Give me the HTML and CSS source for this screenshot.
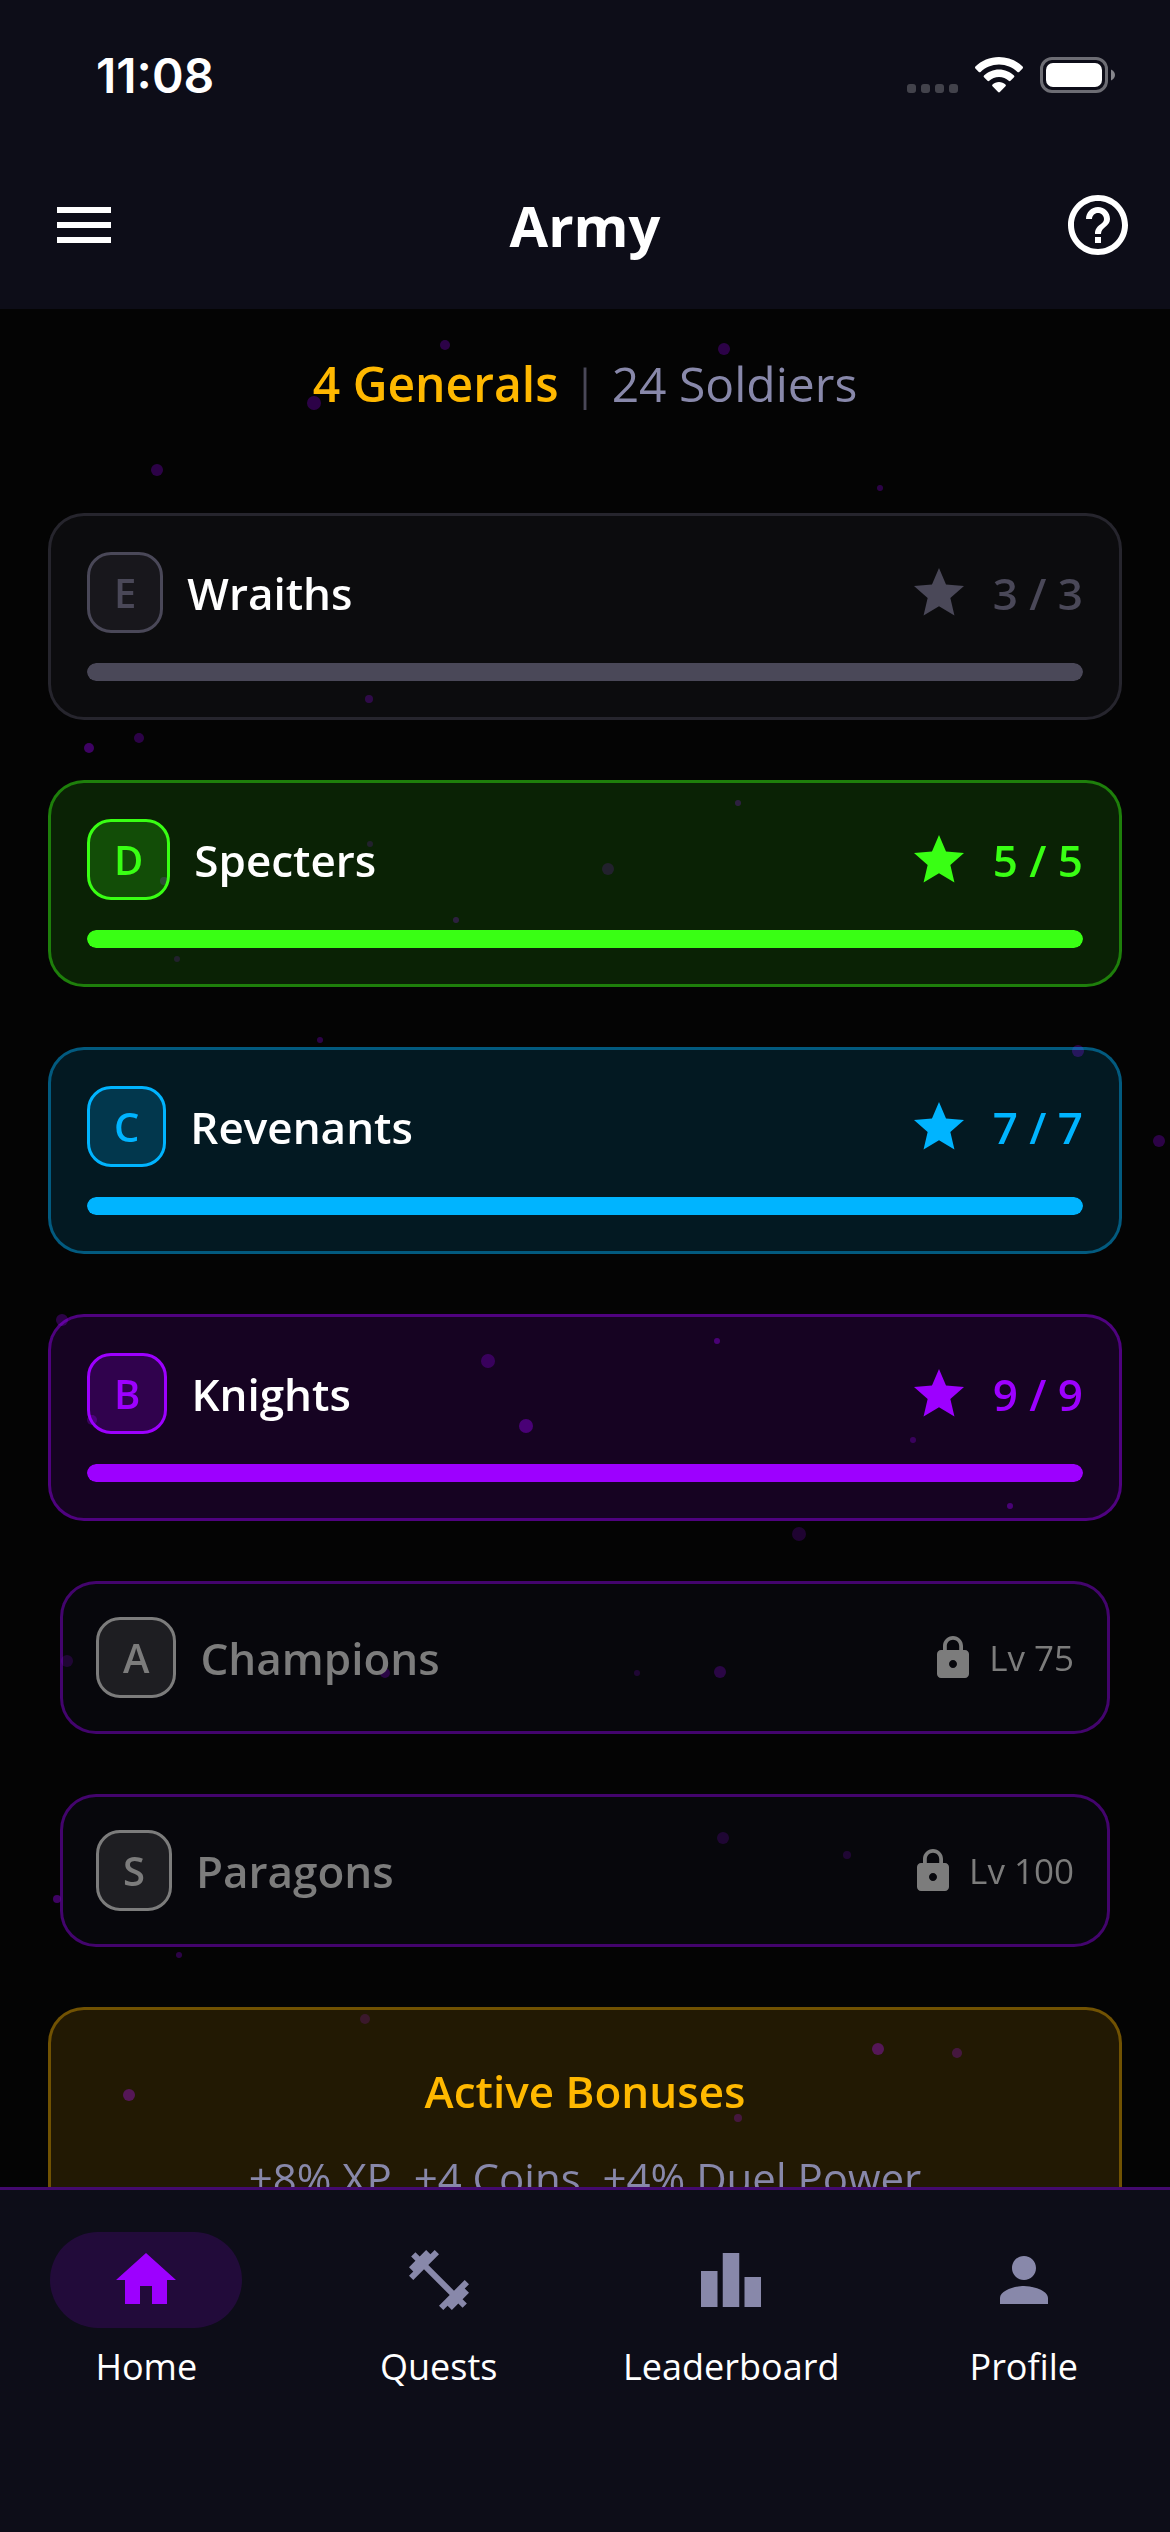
FILE: index.html
```html
<!DOCTYPE html>
<html lang="en">
<head>
    <meta charset="UTF-8">
    <meta name="viewport" content="width=device-width, initial-scale=1.0">
    <title>Army</title>
    <link rel="stylesheet" href="styles.css">
</head>
<body>
    <!-- floating particles behind the list -->
    <svg class="particles" viewBox="0 0 1170 2532" preserveAspectRatio="xMidYMin slice" aria-hidden="true">
        <circle cx="445" cy="345" r="5"/>
        <circle cx="724" cy="349" r="6"/>
        <circle cx="314" cy="403" r="7"/>
        <circle cx="157" cy="470" r="6"/>
        <circle cx="880" cy="488" r="3"/>
        <circle cx="369" cy="699" r="4"/>
        <circle cx="139" cy="738" r="5"/>
        <circle class="bright" cx="89" cy="748" r="5"/>
        <circle cx="738" cy="803" r="3"/>
        <circle class="dim" cx="370" cy="844" r="3"/>
        <circle class="dim" cx="304" cy="856" r="3"/>
        <circle class="dim" cx="608" cy="869" r="6"/>
        <circle cx="164" cy="881" r="4"/>
        <circle cx="456" cy="920" r="3"/>
        <circle class="dim" cx="177" cy="959" r="3"/>
        <circle cx="320" cy="1040" r="3"/>
        <circle cx="1078" cy="1051" r="6"/>
        <circle cx="1159" cy="1141" r="6"/>
        <circle cx="62" cy="1320" r="6"/>
        <circle class="bright" cx="717" cy="1341" r="3"/>
        <circle cx="488" cy="1361" r="7"/>
        <circle cx="92" cy="1420" r="5"/>
        <circle class="bright" cx="526" cy="1426" r="7"/>
        <circle cx="913" cy="1440" r="3"/>
        <circle class="bright" cx="1010" cy="1506" r="3"/>
        <circle class="dim" cx="799" cy="1534" r="7"/>
        <circle cx="67" cy="1661" r="6"/>
        <circle class="bright" cx="385" cy="1673" r="5"/>
        <circle cx="637" cy="1673" r="3"/>
        <circle class="bright" cx="720" cy="1672" r="6"/>
        <circle cx="723" cy="1838" r="6"/>
        <circle cx="847" cy="1855" r="4"/>
        <circle class="bright" cx="57" cy="1899" r="4"/>
        <circle cx="179" cy="1955" r="3"/>
        <circle class="dim" cx="365" cy="2019" r="5"/>
        <circle class="bright" cx="878" cy="2049" r="6"/>
        <circle cx="957" cy="2053" r="5"/>
        <circle class="bright" cx="129" cy="2095" r="6"/>
        <circle cx="738" cy="2118" r="4"/>
    </svg>

    <!-- reusable icons -->
    <svg class="sprite" aria-hidden="true">
        <symbol id="star" viewBox="0 0 24 24"><path d="M12 17.27L18.18 21l-1.64-7.03L22 9.24l-7.19-.61L12 2 9.19 8.63 2 9.24l5.46 4.73L5.82 21z"/></symbol>
        <symbol id="lock" viewBox="0 0 24 24"><path d="M18 8h-1V6c0-2.76-2.24-5-5-5S7 3.24 7 6v2H6c-1.1 0-2 .9-2 2v10c0 1.1.9 2 2 2h12c1.1 0 2-.9 2-2V10c0-1.1-.9-2-2-2zm-6 9c-1.1 0-2-.9-2-2s.9-2 2-2 2 .9 2 2-.9 2-2 2zm3.1-9H8.9V6c0-1.71 1.39-3.1 3.1-3.1s3.1 1.39 3.1 3.1v2z"/></symbol>
    </svg>

    <header class="header">
        <div class="status-bar">
            <span class="time">11:08</span>
            <div class="status-icons">
                <svg class="signal" viewBox="0 0 51 36">
                    <rect x="0" y="27" width="9" height="9" rx="3"/>
                    <rect x="14" y="27" width="9" height="9" rx="3"/>
                    <rect x="28" y="27" width="9" height="9" rx="3"/>
                    <rect x="42" y="27" width="9" height="9" rx="3"/>
                </svg>
                <svg class="wifi" viewBox="0 0 48 36">
                    <path d="M24 0C14.8 0 6.4 3.6.4 9.6q-.8.9 0 1.8l3.4 3.5q.9.8 1.8 0C10.4 10.2 16.9 7.4 24 7.4s13.6 2.800 18.4 7.5q.9.8 1.8 0l3.4-3.5q.8-.9 0-1.8C41.6 3.6 33.2 0 24 0z"/>
                    <path d="M24 12.4c-5.8 0-11.1 2.3-15 6.1q-.9.9 0 1.8l3.5 3.5q.9.9 1.8 0c2.5-2.4 5.9-3.9 9.7-3.9s7.2 1.5 9.7 3.9q.9.9 1.8 0l3.5-3.5q.9-.9 0-1.8c-3.9-3.8-9.2-6.1-15-6.1z"/>
                    <path d="M24 25c-2.5 0-4.8.9-6.5 2.4q-.9.9 0 1.8l5.6 5.9q.9.9 1.8 0l5.6-5.9q.9-.9 0-1.8C28.8 25.9 26.5 25 24 25z"/>
                </svg>
                <svg class="battery" viewBox="0 0 75 36">
                    <rect class="shell" x="1.5" y="1.5" width="65" height="33" rx="10.5"/>
                    <rect x="6" y="6" width="56" height="24" rx="7"/>
                    <path class="nub" d="M71 12.5c2.4 1 4 3.1 4 5.5s-1.6 4.5-4 5.5z"/>
                </svg>
            </div>
        </div>
        <div class="toolbar">
            <button class="icon-btn menu-btn" aria-label="Menu">
                <svg viewBox="0 0 24 24"><path d="M3 18h18v-2H3v2zm0-5h18v-2H3v2zm0-7v2h18V6H3z"/></svg>
            </button>
            <h1>Army</h1>
            <button class="icon-btn help-btn" aria-label="Help">
                <svg viewBox="0 0 24 24"><path d="M11 18h2v-2h-2v2zm1-16C6.48 2 2 6.48 2 12s4.48 10 10 10 10-4.48 10-10S17.52 2 12 2zm0 18c-4.41 0-8-3.59-8-8s3.59-8 8-8 8 3.59 8 8-3.59 8-8 8zm0-14c-2.21 0-4 1.79-4 4h2c0-1.1.9-2 2-2s2 .9 2 2c0 2-3 1.75-3 5h2c0-2.25 3-2.5 3-5 0-2.21-1.79-4-4-4z"/></svg>
            </button>
        </div>
    </header>

    <main class="content">
        <p class="summary">
            <span class="generals">4 Generals</span>
            <span class="divider">|</span>
            <span class="soldiers">24 Soldiers</span>
        </p>

        <section class="rank-card rank-e">
            <div class="rank-row">
                <span class="badge">E</span>
                <h2>Wraiths</h2>
                <svg class="star"><use href="#star"/></svg>
                <span class="count">3 / 3</span>
            </div>
            <div class="bar"><div class="fill" style="width: 100%"></div></div>
        </section>

        <section class="rank-card rank-d">
            <div class="rank-row">
                <span class="badge">D</span>
                <h2>Specters</h2>
                <svg class="star"><use href="#star"/></svg>
                <span class="count">5 / 5</span>
            </div>
            <div class="bar"><div class="fill" style="width: 100%"></div></div>
        </section>

        <section class="rank-card rank-c">
            <div class="rank-row">
                <span class="badge">C</span>
                <h2>Revenants</h2>
                <svg class="star"><use href="#star"/></svg>
                <span class="count">7 / 7</span>
            </div>
            <div class="bar"><div class="fill" style="width: 100%"></div></div>
        </section>

        <section class="rank-card rank-b">
            <div class="rank-row">
                <span class="badge">B</span>
                <h2>Knights</h2>
                <svg class="star"><use href="#star"/></svg>
                <span class="count">9 / 9</span>
            </div>
            <div class="bar"><div class="fill" style="width: 100%"></div></div>
        </section>

        <section class="rank-card locked">
            <div class="rank-row">
                <span class="badge">A</span>
                <h2>Champions</h2>
                <svg class="lock"><use href="#lock"/></svg>
                <span class="level">Lv 75</span>
            </div>
        </section>

        <section class="rank-card locked">
            <div class="rank-row">
                <span class="badge">S</span>
                <h2>Paragons</h2>
                <svg class="lock"><use href="#lock"/></svg>
                <span class="level">Lv 100</span>
            </div>
        </section>

        <section class="bonus-card">
            <h2>Active Bonuses</h2>
            <p>+8% XP, +4 Coins, +4% Duel Power</p>
        </section>
    </main>

    <nav class="tab-bar">
        <a href="#home" class="tab active">
            <span class="tab-icon"><svg viewBox="0 0 24 24"><path d="M10 20v-6h4v6h5v-8h3L12 3 2 12h3v8z"/></svg></span>
            Home
        </a>
        <a href="#quests" class="tab">
            <span class="tab-icon"><svg viewBox="0 0 24 24"><path d="M20.57 14.86L22 13.43 20.57 12 17 15.57 8.43 7 12 3.43 10.57 2 9.14 3.43 7.71 2 5.57 4.14 4.14 2.71 2.71 4.14l1.43 1.43L2 7.71l1.43 1.43L2 10.57 3.43 12 7 8.43 15.57 17 12 20.57 13.43 22l1.43-1.43L16.29 22l2.14-2.14 1.43 1.43 1.43-1.43-1.43-1.43L22 16.29z"/></svg></span>
            Quests
        </a>
        <a href="#leaderboard" class="tab">
            <span class="tab-icon"><svg viewBox="0 0 24 24"><path d="M7.5 21H2V9h5.5v12zm7.25-18h-5.5v18h5.5V3zM22 11h-5.5v10H22V11z"/></svg></span>
            Leaderboard
        </a>
        <a href="#profile" class="tab">
            <span class="tab-icon"><svg viewBox="0 0 24 24"><path d="M12 12c2.21 0 4-1.79 4-4s-1.79-4-4-4-4 1.79-4 4 1.79 4 4 4zm0 2c-2.67 0-8 1.34-8 4v2h16v-2c0-2.66-5.33-4-8-4z"/></svg></span>
            Profile
        </a>
    </nav>
</body>
</html>
```
FILE: styles.css
```css
:root {
    --bg: #040404;
    --surface: #0d0d18;
    --muted: #8888aa;
    --gold: 255, 184, 0;
    --purple: 157, 0, 255;
}

* {
    box-sizing: border-box;
}

body {
    margin: 0;
    height: 100vh;
    display: flex;
    flex-direction: column;
    background: var(--bg);
    color: white;
    font-family: 'Open Sans', 'Noto Sans', sans-serif;
}

h1, h2, p {
    margin: 0;
}

svg {
    display: block;
    fill: currentColor;
    flex-shrink: 0;
}

.sprite {
    position: absolute;
    width: 0;
    height: 0;
}

.particles {
    position: fixed;
    inset: 0;
    width: 100%;
    height: 100%;
    z-index: -1;
    fill: rgba(var(--purple), 0.27);
}

.particles .dim {
    fill: rgba(var(--purple), 0.18);
}

.particles .bright {
    fill: rgba(var(--purple), 0.38);
}

/* header */
.header {
    background: var(--surface);
    padding-bottom: 48px;
}

.status-bar {
    display: flex;
    justify-content: space-between;
    align-items: center;
    height: 150px;
    padding: 0 55px 0 96px;
}

.time {
    font-family: Inter, sans-serif;
    font-size: 48px;
    font-weight: 600;
}

.status-icons {
    display: flex;
    gap: 17px;
}

.signal {
    width: 51px;
    height: 36px;
    opacity: 0.22;
}

.wifi {
    width: 48px;
    height: 36px;
}

.battery {
    width: 75px;
    height: 36px;
}

.battery .shell {
    fill: none;
    stroke: currentColor;
    stroke-width: 3;
    opacity: 0.4;
}

.battery .nub {
    opacity: 0.5;
}

.toolbar {
    display: grid;
    grid-template-columns: 1fr auto 1fr;
    align-items: center;
    height: 111px;
    padding: 39px 36px 0;
}

.icon-btn {
    padding: 0;
    border: none;
    background: none;
    color: white;
    cursor: pointer;
}

.icon-btn svg {
    width: 72px;
    height: 72px;
}

.menu-btn {
    justify-self: start;
    margin-left: 12px;
}

.help-btn {
    justify-self: end;
}

h1 {
    font-size: 56px;
    line-height: 72px;
    font-weight: 700;
}

/* army list */
.content {
    flex: 1;
    min-height: 0;
    overflow-y: auto;
    scrollbar-width: none;
    display: flex;
    flex-direction: column;
    gap: 60px;
    padding: 42px 48px;
}

.summary {
    display: flex;
    justify-content: center;
    align-items: center;
    gap: 15px;
    margin-bottom: 36px;
    font-size: 48px;
    line-height: 66px;
}

.generals {
    color: rgb(var(--gold));
    font-weight: 600;
}

.divider {
    color: #4a4858;
    font-size: 42px;
}

.soldiers {
    color: var(--muted);
}

.rank-card {
    flex-shrink: 0;
    padding: 36px;
    border: 3px solid rgba(var(--accent), 0.42);
    border-radius: 36px;
    background: rgba(var(--accent), 0.12);
}

.rank-e { --accent: 74, 72, 88; }
.rank-d { --accent: 57, 255, 20; }
.rank-c { --accent: 0, 180, 255; }
.rank-b { --accent: 157, 0, 255; }

.rank-row {
    display: flex;
    align-items: center;
}

.badge {
    padding: 0 24px;
    border: 3px solid rgb(var(--accent));
    border-radius: 24px;
    background: rgba(var(--accent), 0.2);
    color: rgb(var(--accent));
    font-size: 40px;
    line-height: 75px;
    font-weight: 600;
}

.rank-card h2 {
    flex: 1;
    margin-left: 24px;
    font-size: 44px;
    line-height: 66px;
    font-weight: 600;
}

.star {
    width: 60px;
    height: 60px;
    margin-right: 24px;
    color: rgb(var(--accent));
}

.count {
    color: rgb(var(--accent));
    font-size: 44px;
    line-height: 66px;
    font-weight: 600;
}

.bar {
    height: 18px;
    margin-top: 30px;
    border-radius: 9px;
    overflow: hidden;
    background: rgba(var(--accent), 0.2);
}

.fill {
    height: 100%;
    border-radius: 9px;
    background: rgb(var(--accent));
}

/* ranks that are not unlocked yet */
.locked {
    --accent: 124, 124, 124;
    margin: 0 12px;
    padding: 33px;
    border-color: rgba(var(--purple), 0.4);
    background: rgba(13, 13, 24, 0.4);
    color: rgb(var(--accent));
}

.lock {
    width: 48px;
    height: 48px;
    margin-right: 12px;
}

.level {
    font-size: 35px;
    line-height: 54px;
}

.bonus-card {
    flex-shrink: 0;
    padding: 48px 36px;
    border: 3px solid rgba(var(--gold), 0.36);
    border-radius: 36px;
    background: rgba(var(--gold), 0.12);
    text-align: center;
}

.bonus-card h2 {
    color: rgb(var(--gold));
    font-size: 44px;
    line-height: 66px;
    font-weight: 600;
}

.bonus-card p {
    margin-top: 24px;
    color: var(--muted);
    font-size: 42px;
    line-height: 60px;
}

/* bottom navigation */
.tab-bar {
    display: grid;
    grid-template-columns: repeat(4, 1fr);
    padding: 42px 0 138px;
    border-top: 3px solid #430a6e;
    background: var(--surface);
}

.tab {
    display: flex;
    flex-direction: column;
    align-items: center;
    gap: 12px;
    color: white;
    font-size: 36px;
    line-height: 54px;
    text-decoration: none;
}

.tab-icon {
    padding: 12px 60px;
    border-radius: 48px;
    color: var(--muted);
}

.tab-icon svg {
    width: 72px;
    height: 72px;
}

.active .tab-icon {
    background: rgba(var(--purple), 0.15);
    color: rgb(var(--purple));
}
```
